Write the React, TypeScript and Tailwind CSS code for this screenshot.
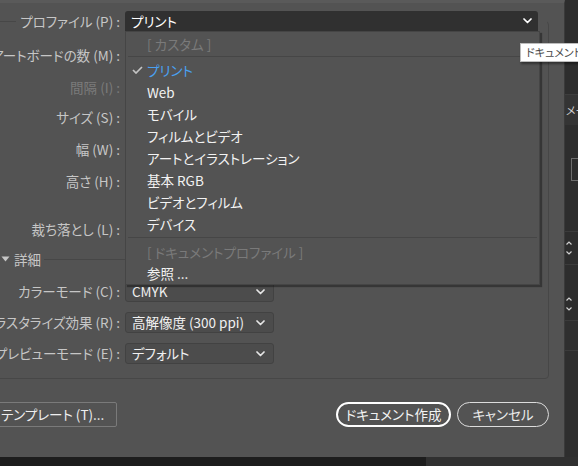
import React from 'react';

// New document dialog with the profile dropdown open
const Chevron = ({ className = '' }: { className?: string }) => (
  <svg width="9" height="6" viewBox="0 0 9 6" className={className}>
    <path d="M1 1l3.5 3.5L8 1" fill="none" stroke="currentColor" strokeWidth="1.7" strokeLinecap="round" strokeLinejoin="round" />
  </svg>
);

const Check = () => (
  <svg width="11" height="8" viewBox="0 0 11 8" className="text-[#c4c4c4]">
    <path d="M1 4l3 3 6-6" fill="none" stroke="currentColor" strokeWidth="1.7" />
  </svg>
);

function FieldRow({ label, mt, disabled }: { label: string; mt: string; disabled?: boolean }) {
  return (
    <div className={`flex items-center h-[20px] ${mt}`}>
      <div className={`w-[159px] text-right whitespace-nowrap ${disabled ? 'text-[#7b7b7b]' : 'text-[#c6c6c6]'}`}>
        {label}
      </div>
    </div>
  );
}

function SmallSelect({ label, value, mt }: { label: string; value: string; mt: string }) {
  return (
    <div className={`flex items-center h-[21px] ${mt}`}>
      <div className="w-[159px] text-right whitespace-nowrap text-[#c6c6c6]">{label}</div>
      <div className="ml-[5px] w-[149px] h-[21px] flex items-center justify-between pl-[6px] pr-[8px] bg-[#4c4c4c] border border-[#424242] rounded-[3px] text-[#f0f0f0]">
        <span className="whitespace-nowrap">{value}</span>
        <Chevron className="text-[#e6e6e6]" />
      </div>
    </div>
  );
}

const menuItems = ['Web', 'モバイル', 'フィルムとビデオ', 'アートとイラストレーション', '基本 RGB', 'ビデオとフィルム', 'デバイス'];

export default function App() {
  return (
    <div className="relative w-[578px] h-[466px] overflow-hidden bg-[#2d2d2d] flex flex-col font-['Noto_Sans_CJK_JP',sans-serif] text-[13.5px] [font-feature-settings:'palt']">
      <div className="flex h-[457px]">
        {/* Dialog */}
        <div className="w-[565px] h-full bg-[#535353] border-t-[3px] border-[#5a5a5a] border-r border-r-[#3a3a3a] flex flex-col">
          <div className="ml-[-40px] mt-[18px] w-[589px] h-[358px] border border-[#474747] rounded-[4px] flex flex-col">
            {/* Profile row sits on the panel border */}
            <div className="-mt-[11px] flex items-center h-[20px]">
              <div className="w-[55px]" />
              <div className="w-[109px] h-full bg-[#535353] flex items-center justify-end pr-[5px] text-[#c6c6c6] whitespace-nowrap">
                プロファイル (P) :
              </div>
              <div className="w-[413px] h-[20px] bg-[#303030] rounded-t-[3px] flex items-center justify-between pl-[6px] pr-[6px] text-white">
                <span>プリント</span>
                <Chevron className="text-white" />
              </div>
              <div className="w-[9px] h-full bg-[#535353]" />
            </div>

            <FieldRow label="アートボードの数 (M) :" mt="mt-[14px]" />
            <FieldRow label="間隔 (I) :" mt="mt-[12px]" disabled />
            <FieldRow label="サイズ (S) :" mt="mt-[10px]" />
            <FieldRow label="幅 (W) :" mt="mt-[12px]" />
            <FieldRow label="高さ (H) :" mt="mt-[12px]" />
            <FieldRow label="裁ち落とし (L) :" mt="mt-[28px]" />

            {/* Advanced section header */}
            <div className="mt-[10px] flex items-center h-[20px] pl-[40px] text-[#c6c6c6]">
              <svg width="9" height="6" viewBox="0 0 9 6" className="text-[#c6c6c6]">
                <path d="M0.5 0.5h8L4.5 5.5z" fill="currentColor" />
              </svg>
              <span className="ml-[4px]">詳細</span>
              <div className="flex-1 h-px bg-[#474747] ml-[3px] mr-[8px]" />
            </div>

            <SmallSelect label="カラーモード (C) :" value="CMYK" mt="mt-[12px]" />
            <SmallSelect label="ラスタライズ効果 (R) :" value="高解像度 (300 ppi)" mt="mt-[10px]" />
            <SmallSelect label="プレビューモード (E) :" value="デフォルト" mt="mt-[10px]" />
          </div>

          {/* Footer buttons */}
          <div className="mt-[23px] flex items-center h-[25px] pr-[15px]">
            <button className="-ml-[14px] h-[25px] pl-[14px] pr-[12px] border border-[#7a7a7a] rounded-[2px] text-[#eeeeee] whitespace-nowrap">
              テンプレート (T)...
            </button>
            <div className="flex-1" />
            <button className="w-[115px] h-[25px] rounded-full border-2 border-white text-[#f2f2f2] whitespace-nowrap">
              ドキュメント作成
            </button>
            <button className="ml-[6px] w-[92px] h-[25px] rounded-full border-[1.5px] border-[#dcdcdc] text-[#ececec] whitespace-nowrap">
              キャンセル
            </button>
          </div>
        </div>

        {/* Panels behind the dialog */}
        <div className="flex-1 flex flex-col text-[#d0d0d0] overflow-hidden">
          <div className="h-[95px] bg-[#2d2d2d] border-b border-[#3d3d3d]" />
          <div className="h-[30px] bg-[#343434] flex items-center pl-[1px] text-[11px] whitespace-nowrap">メー</div>
          <div className="h-[33px] bg-[#2d2d2d]" />
          <div className="h-[23px] ml-[6px] border-[1.5px] border-r-0 border-[#6c6c6c]" />
          <div className="h-[51px] bg-[#2d2d2d] border-b border-[#3b3b3b]" />
          <div className="h-[33px] bg-[#2d2d2d] border-b border-[#3b3b3b] flex flex-col justify-center gap-[6px] pl-[1px]">
            <svg width="6" height="4" viewBox="0 0 6 4"><path d="M0.5 3.5L3 1l2.5 2.5" fill="none" stroke="currentColor" strokeWidth="1.2" /></svg>
            <svg width="6" height="4" viewBox="0 0 6 4"><path d="M0.5 0.5L3 3l2.5-2.5" fill="none" stroke="currentColor" strokeWidth="1.2" /></svg>
          </div>
          <div className="h-[22px] bg-[#2d2d2d]" />
          <div className="h-[34px] bg-[#2d2d2d] border-b border-[#3b3b3b] flex flex-col justify-center gap-[6px] pl-[1px]">
            <svg width="6" height="4" viewBox="0 0 6 4"><path d="M0.5 3.5L3 1l2.5 2.5" fill="none" stroke="currentColor" strokeWidth="1.2" /></svg>
            <svg width="6" height="4" viewBox="0 0 6 4"><path d="M0.5 0.5L3 3l2.5-2.5" fill="none" stroke="currentColor" strokeWidth="1.2" /></svg>
          </div>
          <div className="h-[30px] bg-[#2f2f2f] border-b border-[#3b3b3b]" />
          <div className="flex-1 bg-[#2e2e2e]" />
        </div>
      </div>

      {/* Strip below the dialog */}
      <div className="flex-1 flex">
        <div className="w-[426px] bg-[#1d1d1d]" />
        <div className="flex-1 bg-[#303030]" />
      </div>

      {/* Open profile menu */}
      <div className="absolute left-[125px] top-[31px] w-[415px] h-[254px] bg-[#535353] border border-[#454545] shadow-[2px_2px_1px_rgba(0,0,0,0.35)] pt-[1px] text-[#f2f2f2]">
        <div className="h-[22px] flex items-center pl-[21px] text-[#7a7a7a]">[ カスタム ]</div>
        <div className="mx-[2px] mt-[1px] h-px bg-[#464646]" />
        <div className="mt-[2px] h-[22px] flex items-center text-[#4aa1f2]">
          <span className="w-[21px] flex justify-center pl-[2px]"><Check /></span>
          プリント
        </div>
        {menuItems.map((item) => (
          <div key={item} className="h-[22px] flex items-center pl-[21px] whitespace-nowrap">
            {item}
          </div>
        ))}
        <div className="mx-[2px] mt-[2px] h-px bg-[#464646]" />
        <div className="mt-[3px] h-[22px] flex items-center pl-[21px] text-[#7a7a7a]">[ ドキュメントプロファイル ]</div>
        <div className="h-[21px] flex items-center pl-[21px]">参照 ...</div>
      </div>

      {/* Tooltip */}
      <div className="absolute left-[520px] top-[43px] w-[70px] h-[19px] bg-white border border-[#bdbdbd] shadow-[1px_2px_2px_rgba(0,0,0,0.4)] flex items-center pl-[5px] text-[11px] text-[#4a4a4a] whitespace-nowrap overflow-hidden">
        ドキュメントプロファイル
      </div>
    </div>
  );
}
